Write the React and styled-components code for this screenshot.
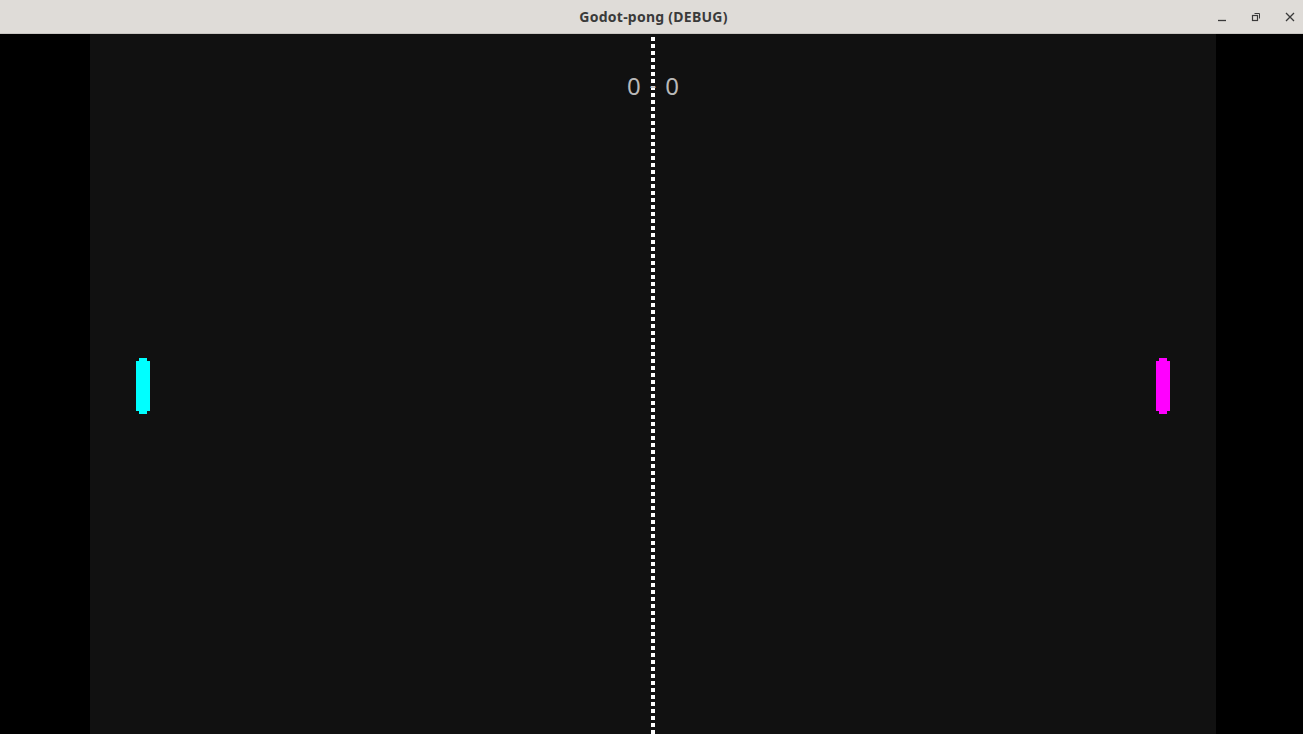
import React from 'react';
import styled, { createGlobalStyle } from 'styled-components';

const GlobalStyle = createGlobalStyle`
  html, body {
    margin: 0;
    padding: 0;
    background: #000;
    overflow: hidden;
  }
`;

const Window = styled.div`
  width: 1303px;
  height: 734px;
  display: flex;
  flex-direction: column;
  background: #000;
`;

const TitleBar = styled.div`
  height: 33px;
  flex: none;
  display: flex;
  align-items: center;
  justify-content: center;
  position: relative;
  background: #dfdcd8;
  border-bottom: 1px solid #c9c6c2;
`;

const Title = styled.span`
  font-family: "Noto Sans", "DejaVu Sans", sans-serif;
  font-weight: 700;
  font-size: 14px;
  color: #3a3a3a;
  letter-spacing: 0.25px;
  margin-left: 4px;
`;

const Controls = styled.div`
  position: absolute;
  right: 4px;
  top: 0;
  height: 33px;
  display: flex;
  align-items: center;
  gap: 16px;
`;

const Ctrl = styled.svg`
  width: 18px;
  height: 18px;
  display: block;
`;

const Body = styled.div`
  flex: 1;
  display: flex;
`;

const Bar = styled.div`
  width: ${p => p.$w}px;
  flex: none;
  background: #000;
`;

const Field = styled.div`
  width: 1126px;
  flex: none;
  position: relative;
  background: #111111;
  overflow: hidden;
`;

const Net = styled.div`
  position: absolute;
  left: 561px;
  top: 0;
  bottom: 0;
  width: 4px;
  background: repeating-linear-gradient(
    to bottom,
    transparent 0px,
    transparent 3px,
    #ffffff 3px,
    #ffffff 7px
  );
`;

const Score = styled.div`
  position: absolute;
  left: 0;
  right: 0;
  top: 40px;
  display: flex;
  justify-content: center;
  align-items: center;
  gap: 9px;
  font-family: "Noto Sans", "DejaVu Sans", sans-serif;
  font-size: 24px;
  line-height: 24px;
  color: #b9b9b9;
`;

const Sep = styled.span`
  font-size: 20px;
`;

const Paddle = styled.div`
  position: absolute;
  left: ${p => p.$x}px;
  top: 327px;
  width: 14px;
  height: 50px;
  background: ${p => p.$color};

  &::before,
  &::after {
    content: '';
    position: absolute;
    left: 3px;
    width: 8px;
    height: 3px;
    background: ${p => p.$color};
  }
  &::before { top: -3px; }
  &::after { bottom: -3px; }
`;

export default function App() {
  return (
    <Window>
      <GlobalStyle />
      <TitleBar>
        <Title>Godot-pong (DEBUG)</Title>
        <Controls>
          <Ctrl viewBox="0 0 18 18">
            <line x1="5" y1="12.5" x2="13" y2="12.5" stroke="#3a3a3a" strokeWidth="1.3" />
          </Ctrl>
          <Ctrl viewBox="0 0 18 18">
            <rect x="5.5" y="7.5" width="5" height="5" fill="none" stroke="#3a3a3a" strokeWidth="1.2" />
            <path d="M7.5 5.5 H12.5 V10.5" fill="none" stroke="#3a3a3a" strokeWidth="1" />
          </Ctrl>
          <Ctrl viewBox="0 0 18 18">
            <path d="M5 5 L13 13 M13 5 L5 13" stroke="#3a3a3a" strokeWidth="1.3" />
          </Ctrl>
        </Controls>
      </TitleBar>
      <Body>
        <Bar $w={90} />
        <Field>
          <Net />
          <Score>
            <span>0</span>
            <Sep>-</Sep>
            <span>0</span>
          </Score>
          <Paddle $x={46} $color="#00ffff" />
          <Paddle $x={1066} $color="#ff00ff" />
        </Field>
        <Bar $w={87} />
      </Body>
    </Window>
  );
}
